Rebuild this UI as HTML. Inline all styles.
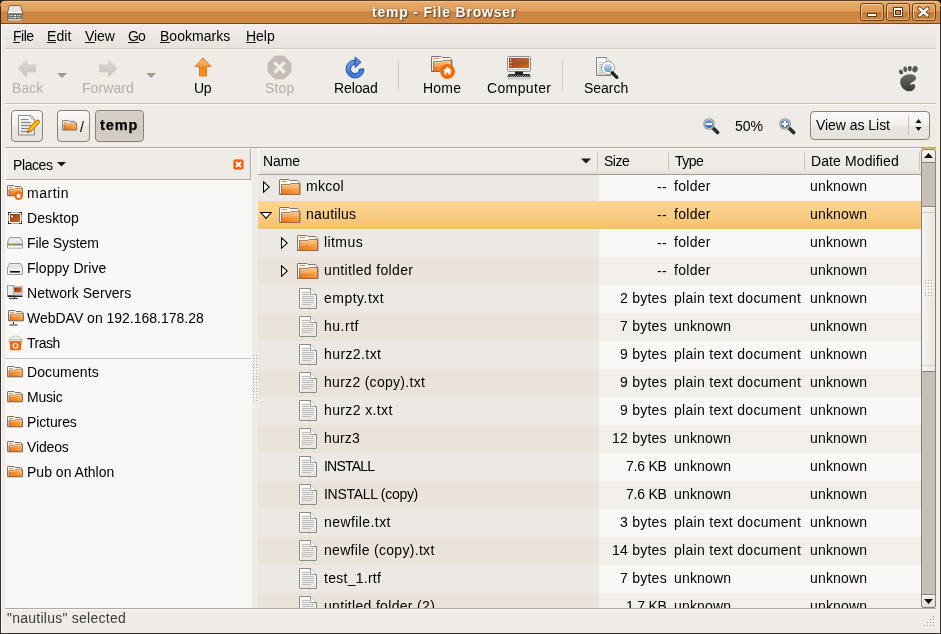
<!DOCTYPE html>
<html><head><meta charset="utf-8">
<style>
*{margin:0;padding:0;box-sizing:border-box}
html,body{width:941px;height:634px;overflow:hidden;background:#1e1b18}
body{position:relative;font-family:"Liberation Sans",sans-serif;font-size:14px;color:#000}
.a{position:absolute;display:block}
.t{position:absolute;white-space:nowrap;line-height:16px;will-change:transform}
.wb{position:absolute;top:3px;width:24px;height:18px;border:1px solid #6b4420;border-radius:3px;
box-shadow:inset 1px 1px 0 #f2c892,inset -1px -1px 0 #e7ac6c;
background:linear-gradient(#e8ad6e,#dc9752 50%,#c47a36 52%,#cd8644)}
</style></head><body>

<svg width="0" height="0" style="position:absolute"><defs>
<linearGradient id="gFold" x1="1" y1="0" x2="0" y2="1"><stop offset="0" stop-color="#fbc07a"/><stop offset="0.45" stop-color="#f59a3c"/><stop offset="1" stop-color="#e86a10"/></linearGradient>
<linearGradient id="gFoldTop" x1="0" y1="0" x2="0" y2="1"><stop offset="0" stop-color="#fdd7a6"/><stop offset="1" stop-color="#f7a24a"/></linearGradient>
<linearGradient id="gPaper" x1="0" y1="0" x2="0" y2="1"><stop offset="0" stop-color="#ffffff"/><stop offset="1" stop-color="#e4e4e1"/></linearGradient>
<linearGradient id="gUp" x1="0" y1="0" x2="0" y2="1"><stop offset="0" stop-color="#fbb978"/><stop offset="0.5" stop-color="#f7993a"/><stop offset="0.52" stop-color="#f28415"/><stop offset="1" stop-color="#f59a20"/></linearGradient>
<linearGradient id="gGrey" x1="0" y1="0" x2="0" y2="1"><stop offset="0" stop-color="#dcd7d2"/><stop offset="1" stop-color="#c9c2bb"/></linearGradient>
<linearGradient id="gBlue" x1="0" y1="0" x2="1" y2="1"><stop offset="0" stop-color="#8fb4ea"/><stop offset="0.5" stop-color="#3a73cf"/><stop offset="1" stop-color="#4d8ee8"/></linearGradient>
<linearGradient id="gScreen" x1="0" y1="0" x2="1" y2="1"><stop offset="0" stop-color="#8a2c12"/><stop offset="0.5" stop-color="#b0501e"/><stop offset="1" stop-color="#d46a10"/></linearGradient>
<linearGradient id="gLens" x1="0" y1="0" x2="0" y2="1"><stop offset="0" stop-color="#d8e8f5"/><stop offset="1" stop-color="#5a94c8"/></linearGradient>
<linearGradient id="gZoom" x1="0" y1="0" x2="0" y2="1"><stop offset="0" stop-color="#6f9bd8"/><stop offset="1" stop-color="#3567b8"/></linearGradient>
<linearGradient id="gFoot" x1="0" y1="0" x2="0" y2="1"><stop offset="0" stop-color="#6a6a6a"/><stop offset="1" stop-color="#3a3a3a"/></linearGradient>
</defs></svg>
<div class="a" style="left:0px;top:20px;width:941px;height:614px;background:#EFEBE7"></div>
<div class="a" style="left:0px;top:24px;width:1px;height:610px;background:#36322d"></div>
<div class="a" style="left:940px;top:24px;width:1px;height:610px;background:#36322d"></div>
<div class="a" style="left:0px;top:633px;width:941px;height:1px;background:#36322d"></div>
<div class="a" style="left:1px;top:24px;width:1px;height:609px;background:#fbfaf8"></div>
<div class="a" style="left:0px;top:0px;width:941px;height:24px;border-radius:6px 6px 0 0;background:linear-gradient(#5a4028 0,#5a4028 1px,#f3c48e 1px,#e6a866 3px,#e0a060 11px,#c98139 12px,#cb8440 13px,#d38c46 22px,#d38c46 23px,#6d4a2a 23px,#6d4a2a 24px)"></div>
<div class="a" style="left:0px;top:6px;width:1px;height:18px;background:#3a2a1c"></div>
<div class="a" style="left:940px;top:6px;width:1px;height:18px;background:#3a2a1c"></div>
<svg class="a" style="left:7px;top:5px" width="16" height="16" viewBox="0 0 16 16" ><path d="M2.5 0.5h11l1.8 6.5v8.5h-14.6v-8.5z" fill="#ececea" stroke="#6b4a2c" stroke-width="0.8"/><path d="M3 1.2h10l1.4 5.3H1.6z" fill="#e2e2e0"/><rect x="1.2" y="7" width="13.6" height="1.2" fill="#fff"/><rect x="1.2" y="8.2" width="13.6" height="6.3" fill="#6d6d6b"/><rect x="2.5" y="10" width="3.5" height="1" fill="#bdbdbb"/><rect x="7" y="10" width="2" height="1" fill="#fff"/><rect x="10" y="10" width="3.5" height="1" fill="#bdbdbb"/><rect x="2.5" y="12" width="3.5" height="1" fill="#bdbdbb"/><rect x="7" y="12" width="2" height="1" fill="#fff"/><rect x="10" y="12" width="3.5" height="1" fill="#bdbdbb"/><rect x="1.2" y="14.5" width="13.6" height="1" fill="#fafafa"/></svg>
<div class="t" style="left:372px;top:4px;font-weight:bold;color:#fff;letter-spacing:0.8px;text-shadow:1px 1px 1px #6a4420,0 0 2px #8a5a2a">temp - File Browser</div>
<div class="wb" style="left:860px"></div>
<div class="wb" style="left:886px"></div>
<div class="wb" style="left:912px"></div>
<div class="a" style="left:867px;top:13px;width:10px;height:4px;background:#fff;border:1px solid #5a3a1a"></div>
<div class="a" style="left:893px;top:7px;width:10px;height:10px;border:1px solid #5a3a1a;background:#fff;border-top-width:1px"></div>
<div class="a" style="left:895px;top:10px;width:6px;height:5px;border:1px solid #5a3a1a;background:#d08a45"></div>
<svg class="a" style="left:917px;top:6px" width="13" height="12" viewBox="0 0 13 12" ><path d="M2.5 2.5l8 7M10.5 2.5l-8 7" stroke="#5a3a1a" stroke-width="4.2" stroke-linecap="round"/><path d="M2.5 2.5l8 7M10.5 2.5l-8 7" stroke="#fff" stroke-width="2.4" stroke-linecap="round"/></svg>
<div class="a" style="left:5px;top:24px;width:931px;height:25px;background:linear-gradient(#f2efeb,#e6e1db)"></div>
<div class="a" style="left:5px;top:48px;width:931px;height:1px;background:#d3cbc1"></div>
<div class="a" style="left:5px;top:49px;width:931px;height:1px;background:#fbfaf8"></div>
<div class="t" style="left:13px;top:28px;letter-spacing:-0.50px;">File</div>
<div class="a" style="left:13px;top:42px;width:7px;height:1px;background:#1c1c1c"></div>
<div class="t" style="left:47px;top:28px;letter-spacing:0.07px;">Edit</div>
<div class="a" style="left:47px;top:42px;width:9px;height:1px;background:#1c1c1c"></div>
<div class="t" style="left:85px;top:28px;letter-spacing:-0.09px;">View</div>
<div class="a" style="left:85px;top:42px;width:10px;height:1px;background:#1c1c1c"></div>
<div class="t" style="left:128px;top:28px;letter-spacing:-0.80px;">Go</div>
<div class="a" style="left:128px;top:42px;width:11px;height:1px;background:#1c1c1c"></div>
<div class="t" style="left:160px;top:28px;letter-spacing:0.03px;">Bookmarks</div>
<div class="a" style="left:160px;top:42px;width:10px;height:1px;background:#1c1c1c"></div>
<div class="t" style="left:246px;top:28px;letter-spacing:-0.04px;">Help</div>
<div class="a" style="left:246px;top:42px;width:10px;height:1px;background:#1c1c1c"></div>
<svg class="a" style="left:17px;top:59px" width="20" height="19" viewBox="0 0 20 19" ><path d="M1 9.5L9.5 1v5h9v7h-9v5z" fill="url(#gGrey)" stroke="#cfc9c3" stroke-width="0.8"/></svg>
<svg class="a" style="left:57px;top:73px" width="11" height="5" viewBox="0 0 11 5" ><path d="M0 0h10l-5 5z" fill="#a39889"/></svg>
<svg class="a" style="left:98px;top:59px" width="20" height="19" viewBox="0 0 20 19" ><path d="M19 9.5L10.5 1v5h-9v7h9v5z" fill="url(#gGrey)" stroke="#cfc9c3" stroke-width="0.8"/></svg>
<svg class="a" style="left:146px;top:73px" width="11" height="5" viewBox="0 0 11 5" ><path d="M0 0h10l-5 5z" fill="#a39889"/></svg>
<div class="t" style="left:12px;top:80px;letter-spacing:0.04px;color:#b7aea4">Back</div>
<div class="t" style="left:82px;top:80px;letter-spacing:0.07px;color:#b7aea4">Forward</div>
<svg class="a" style="left:194px;top:57px" width="18" height="20" viewBox="0 0 18 20" ><path d="M9 1L1 9.5h4.5V19h7V9.5H17z" fill="url(#gUp)" stroke="#d8740e" stroke-width="0.9" stroke-linejoin="round"/></svg>
<div class="t" style="left:194px;top:80px;letter-spacing:-0.30px;">Up</div>
<svg class="a" style="left:267px;top:55px" width="25" height="25" viewBox="0 0 25 25" ><path d="M8 1h9l7 7v9l-7 7H8l-7-7V8z" fill="#c5bdb8" stroke="#bdb5b0" stroke-width="0.6"/><path d="M8.5 8.5l8 8M16.5 8.5l-8 8" stroke="#f2eeea" stroke-width="3.2" stroke-linecap="square"/></svg>
<div class="t" style="left:265px;top:80px;letter-spacing:0.15px;color:#b7aea4">Stop</div>
<svg class="a" style="left:345px;top:56px" width="21" height="23" viewBox="0 0 21 23" ><path d="M10 4A9 9 0 1 0 19 13L14.5 13A4.5 4.5 0 1 1 10 8.5Z" fill="url(#gBlue)" stroke="#1b48a0" stroke-width="0.9" stroke-linejoin="round"/><path d="M10.2 1L16 6.2 10.2 11.6Z" fill="#5a8ad8" stroke="#1b48a0" stroke-width="0.9" stroke-linejoin="round"/></svg>
<div class="t" style="left:334px;top:80px;letter-spacing:-0.11px;">Reload</div>
<div class="a" style="left:398px;top:60px;width:1px;height:31px;background:#d0c8be"></div>
<svg class="a" style="left:431px;top:56px" width="22" height="17" viewBox="0 0 22 17"><path d="M0.5 15.5V1q0-.5.5-.5h9l1 1h7.5l2.5 3V15.5z" fill="#fbfbf9" stroke="#7a766f"/><path d="M2.5 2.5h5.5" stroke="#f7913a" stroke-width="1.2"/><path d="M0.8 15.5q1.5-.3 1.7-2V5.5h8.5l1-1h8.5V15.5z" fill="url(#gFold)" stroke="#8d6b4f" stroke-width="0.9"/><path d="M3 6.4h7.8l1-1h7.2" stroke="#fcd3a4" stroke-width="0.9" fill="none"/><path d="M3 11L19.5 8.5V6.5H3z" fill="#ffffff" fill-opacity="0.22"/></svg>
<svg class="a" style="left:439px;top:63px" width="17" height="17" viewBox="0 0 17 17" ><circle cx="8.5" cy="8.5" r="7.5" fill="#f26b0a"/><path d="M8.5 3.8L4 8h1.5v3.5h2v-2h2v2h2V8H13z" fill="#fff"/></svg>
<div class="t" style="left:423px;top:80px;letter-spacing:0.23px;">Home</div>
<svg class="a" style="left:506px;top:55px" width="26" height="25" viewBox="0 0 26 25" ><rect x="1.5" y="1.5" width="23" height="15" rx="1.2" fill="#ecece9" stroke="#8e8e8a"/><rect x="3" y="3" width="20" height="10" fill="url(#gScreen)"/><path d="M3 9L23 5V3H3z" fill="#fff" fill-opacity="0.12"/><rect x="4" y="4" width="1.5" height="1.3" fill="#f0c090"/><rect x="4" y="7" width="1.5" height="1.3" fill="#f0c090"/><rect x="4" y="10" width="1.5" height="1.3" fill="#f0c090"/><rect x="3" y="14" width="20" height="1" fill="#c8c8c4"/><rect x="19" y="14" width="1" height="1" fill="#7ed000"/><rect x="9" y="16.5" width="8" height="2.5" fill="#1e1e1e"/><path d="M2.5 19h21l1 3h-23z" fill="#262626"/><rect x="3" y="20" width="1" height="1" fill="#8a8a88"/><rect x="5" y="20" width="1" height="1" fill="#8a8a88"/><rect x="7" y="20" width="1" height="1" fill="#8a8a88"/><rect x="9" y="20" width="1" height="1" fill="#8a8a88"/><rect x="11" y="20" width="1" height="1" fill="#8a8a88"/><rect x="13" y="20" width="1" height="1" fill="#8a8a88"/><rect x="15" y="20" width="1" height="1" fill="#8a8a88"/><rect x="17" y="20" width="1" height="1" fill="#8a8a88"/><rect x="19" y="20" width="1" height="1" fill="#8a8a88"/><rect x="21" y="20" width="1" height="1" fill="#8a8a88"/><rect x="4" y="21" width="1" height="1" fill="#8a8a88"/><rect x="6" y="21" width="1" height="1" fill="#8a8a88"/><rect x="8" y="21" width="1" height="1" fill="#8a8a88"/><rect x="10" y="21" width="1" height="1" fill="#8a8a88"/><rect x="12" y="21" width="1" height="1" fill="#8a8a88"/><rect x="14" y="21" width="1" height="1" fill="#8a8a88"/><rect x="16" y="21" width="1" height="1" fill="#8a8a88"/><rect x="18" y="21" width="1" height="1" fill="#8a8a88"/><rect x="20" y="21" width="1" height="1" fill="#8a8a88"/><rect x="22" y="21" width="1" height="1" fill="#8a8a88"/><rect x="3" y="22" width="1" height="1" fill="#8a8a88"/><rect x="5" y="22" width="1" height="1" fill="#8a8a88"/><rect x="7" y="22" width="1" height="1" fill="#8a8a88"/><rect x="9" y="22" width="1" height="1" fill="#8a8a88"/><rect x="11" y="22" width="1" height="1" fill="#8a8a88"/><rect x="13" y="22" width="1" height="1" fill="#8a8a88"/><rect x="15" y="22" width="1" height="1" fill="#8a8a88"/><rect x="17" y="22" width="1" height="1" fill="#8a8a88"/><rect x="19" y="22" width="1" height="1" fill="#8a8a88"/><rect x="21" y="22" width="1" height="1" fill="#8a8a88"/><rect x="1.5" y="22" width="23" height="2" rx="1" fill="#dcdcd8" stroke="#a8a8a4" stroke-width="0.5"/></svg>
<div class="t" style="left:487px;top:80px;letter-spacing:0.36px;">Computer</div>
<div class="a" style="left:562px;top:60px;width:1px;height:31px;background:#d0c8be"></div>
<svg class="a" style="left:595px;top:56px" width="24" height="23" viewBox="0 0 24 23" ><path d="M1.5 1.5h10l4.5 4.5v13.5h-14.5z" fill="url(#gPaper)" stroke="#858580"/><path d="M11.5 1.5v4.5h4.5" fill="#fff" stroke="#999" stroke-width="0.7"/><line x1="3.5" y1="6.5" x2="7.5" y2="6.5" stroke="#c4c4c0"/><line x1="3.5" y1="8.5" x2="7.5" y2="8.5" stroke="#c4c4c0"/><line x1="3.5" y1="10.5" x2="7.5" y2="10.5" stroke="#c4c4c0"/><line x1="3.5" y1="12.5" x2="7.5" y2="12.5" stroke="#c4c4c0"/><line x1="3.5" y1="14.5" x2="7.5" y2="14.5" stroke="#c4c4c0"/><line x1="3.5" y1="16.5" x2="7.5" y2="16.5" stroke="#c4c4c0"/><line x1="3.5" y1="18.5" x2="7.5" y2="18.5" stroke="#c4c4c0"/><circle cx="13" cy="12" r="5.3" fill="url(#gLens)" stroke="#fafafa" stroke-width="2.2"/><circle cx="13" cy="12" r="6.6" fill="none" stroke="#8c8c88" stroke-width="0.8"/><path d="M17.2 16.7l4.6 4.6" stroke="#1a1a1a" stroke-width="3.2" stroke-linecap="round"/><path d="M18.3 17.8l2.5 2.5" stroke="#777" stroke-width="0.8" stroke-dasharray="0.8 0.8"/></svg>
<div class="t" style="left:584px;top:80px;letter-spacing:-0.03px;">Search</div>
<svg class="a" style="left:898px;top:66px" width="22" height="27" viewBox="0 0 22 27" ><ellipse cx="3" cy="6" rx="2" ry="2.6" fill="#5a5a5a" transform="rotate(-25 3 6)"/><ellipse cx="7.2" cy="3.2" rx="2" ry="2.8" fill="#5a5a5a" transform="rotate(-10 7.2 3.2)"/><ellipse cx="11.8" cy="2.6" rx="2" ry="2.7" fill="#555"/><ellipse cx="17" cy="3.2" rx="2.6" ry="3.2" fill="#555" transform="rotate(20 17 3.2)"/><path d="M6 10c4-3 12-2 12 2 0 2.5-3 3.8-5 5-1.2.8-.8 2.2.6 1.4 1.8-1 3.5-.4 3.6 1.6.2 3.5-4 5.8-7 5.2C5 24.5 1.5 19 2.3 14.5 2.6 12.5 4 11.2 6 10z" fill="url(#gFoot)"/></svg>
<div class="a" style="left:5px;top:103px;width:931px;height:1px;background:#c9c0b5"></div>
<div class="a" style="left:5px;top:104px;width:931px;height:1px;background:#fbfaf8"></div>
<div class="a" style="left:11px;top:110px;width:32px;height:32px;border:1px solid #8b8176;border-radius:4px;background:linear-gradient(#fbfaf9 0,#f2efeb 50%,#e9e5e0 51%,#e6e2dc 100%)"></div>
<div class="a" style="left:57px;top:110px;width:33px;height:32px;border:1px solid #8b8176;border-radius:4px;background:linear-gradient(#fbfaf9 0,#f2efeb 50%,#e9e5e0 51%,#e6e2dc 100%)"></div>
<div class="a" style="left:95px;top:110px;width:49px;height:32px;border:1px solid #8b8176;border-radius:4px;background:linear-gradient(#d8d1c9,#d4ccc3 50%,#cfc7be 51%,#d7d0c8)"></div>
<svg class="a" style="left:17px;top:114px" width="23" height="23" viewBox="0 0 23 23" ><path d="M1.5 1.5h10q6 0 6 6v13.5h-16z" fill="url(#gPaper)" stroke="#8d8e89"/><path d="M11.5 1.5q2.5 0 2.5 3.2 3.5-.2 3.5 2.8" fill="#fff" stroke="#9a9a96" stroke-width="0.8"/><line x1="4" y1="5.5" x2="11.5" y2="5.5" stroke="#858583" stroke-width="1.2"/><line x1="4" y1="8.5" x2="14" y2="8.5" stroke="#858583" stroke-width="1.2"/><line x1="4" y1="11.5" x2="14" y2="11.5" stroke="#858583" stroke-width="1.2"/><line x1="4" y1="14.5" x2="14" y2="14.5" stroke="#858583" stroke-width="1.2"/><line x1="4" y1="17.5" x2="14" y2="17.5" stroke="#858583" stroke-width="1.2"/><path d="M11.4 14.9L19.2 6.8Q20.8 5.6 21.9 6.6 22.9 7.8 21.8 9.2L14 17.4z" fill="#f8d200" stroke="#e46c00" stroke-width="1.1" stroke-linejoin="round"/><path d="M11.4 14.9L14 17.4 10.6 18.6z" fill="#f0c080" stroke="#e46c00" stroke-width="0.6"/><path d="M10.4 18.8l.6-1.8 1.2 1.2z" fill="#111"/></svg>
<svg class="a" style="left:62px;top:120px" width="15" height="12" viewBox="0 0 16 13"><path d="M0.5 10.7V1q0-.5.5-.5h6l1 1h5.5l2 2V10.7z" fill="#fbfbf9" stroke="#7a766f"/><path d="M2 2.5h4" stroke="#f7913a" stroke-width="1.1"/><path d="M0.8 10.7q1-.3 1.2-1.3V4.3h6l1-1h6.5V10.7z" fill="url(#gFold)" stroke="#8d6b4f" stroke-width="0.9"/><path d="M2.5 5.1h5.5l1-1h5.5" stroke="#fcd3a4" stroke-width="0.8" fill="none"/></svg>
<div class="t" style="left:80px;top:119px;font-size:14px;letter-spacing:0">/</div>
<div class="t" style="left:100px;top:117px;font-weight:bold;letter-spacing:0.9px;font-size:14.5px;-webkit-text-stroke:0.25px #000">temp</div>
<svg class="a" style="left:703px;top:118px" width="18" height="18" viewBox="0 0 18 18" ><path d="M10 10l4.6 4.6" stroke="#262626" stroke-width="3.6" stroke-linecap="round"/><path d="M11.2 11.2l2.6 2.6" stroke="#666" stroke-width="0.8" stroke-dasharray="0.7 0.7"/><circle cx="6" cy="6" r="5.2" fill="#f4f4f2" stroke="#9a9a96" stroke-width="1.3"/><circle cx="6" cy="6" r="4.1" fill="url(#gZoom)"/><rect x="3" y="5" width="6" height="2" fill="#fff"/></svg>
<svg class="a" style="left:779px;top:118px" width="18" height="18" viewBox="0 0 18 18" ><path d="M10 10l4.6 4.6" stroke="#262626" stroke-width="3.6" stroke-linecap="round"/><path d="M11.2 11.2l2.6 2.6" stroke="#666" stroke-width="0.8" stroke-dasharray="0.7 0.7"/><circle cx="6" cy="6" r="5.2" fill="#f4f4f2" stroke="#9a9a96" stroke-width="1.3"/><circle cx="6" cy="6" r="4.1" fill="url(#gZoom)"/><rect x="3" y="5" width="6" height="2" fill="#fff"/><rect x="5" y="3" width="2" height="6" fill="#fff"/></svg>
<div class="t" style="left:735px;top:118px;letter-spacing:-0.04px;">50%</div>
<div class="a" style="left:810px;top:111px;width:120px;height:29px;border:1px solid #8b8176;border-radius:4px;background:linear-gradient(#fbfaf9 0,#f2efeb 50%,#e9e5e0 51%,#e6e2dc 100%)"></div>
<div class="a" style="left:908px;top:115px;width:1px;height:20px;background:#c9c1b7"></div>
<svg class="a" style="left:915px;top:118px" width="7" height="14" viewBox="0 0 7 14" ><path d="M0.5 5h6l-3-4z M0.5 9h6l-3 4z" fill="#111"/></svg>
<div class="t" style="left:816px;top:117px;letter-spacing:-0.04px;">View as List</div>
<div class="a" style="left:5px;top:147px;width:247px;height:462px;background:#F9F8F7"></div>
<div class="a" style="left:5px;top:147px;width:931px;height:1px;background:#b2a99e"></div>
<div class="a" style="left:5px;top:148px;width:246px;height:32px;background:#EFEBE7;border-top:1px solid #fff;border-left:1px solid #fff;border-right:1px solid #b5aca1;border-bottom:1px solid #b5aca1"></div>
<div class="t" style="left:13px;top:157px;letter-spacing:-0.41px;">Places</div>
<svg class="a" style="left:57px;top:162px" width="10" height="5" viewBox="0 0 10 5" ><path d="M0 0h9l-4.5 4.5z" fill="#1c1c1c"/></svg>
<svg class="a" style="left:233px;top:159px" width="11" height="11" viewBox="0 0 11 11" ><rect x="0.5" y="0.5" width="10" height="10" rx="1.8" fill="#f05f12" stroke="#f08a50" stroke-width="0.6"/><path d="M3 3l5 5M8 3l-5 5" stroke="#fff" stroke-width="2"/></svg>
<div class="a" style="left:5px;top:608px;width:931px;height:1px;background:#b2a99e"></div>
<div class="a" style="left:5px;top:609px;width:931px;height:1px;background:#fbfaf8"></div>
<div class="t" style="left:27px;top:185px;letter-spacing:0.52px;">martin</div>
<div class="t" style="left:27px;top:210px;letter-spacing:0.08px;">Desktop</div>
<div class="t" style="left:27px;top:235px;letter-spacing:-0.12px;">File System</div>
<div class="t" style="left:27px;top:260px;letter-spacing:0.07px;">Floppy Drive</div>
<div class="t" style="left:27px;top:285px;letter-spacing:0.06px;">Network Servers</div>
<div class="t" style="left:27px;top:310px;letter-spacing:-0.01px;">WebDAV on 192.168.178.28</div>
<div class="t" style="left:27px;top:335px;letter-spacing:-0.51px;">Trash</div>
<div class="a" style="left:5px;top:358px;width:246px;height:1px;background:#c8c3bd"></div>
<div class="t" style="left:27px;top:364px;letter-spacing:0.11px;">Documents</div>
<svg class="a" style="left:7px;top:366px" width="16" height="13" viewBox="0 0 16 13"><path d="M0.5 10.7V1q0-.5.5-.5h6l1 1h5.5l2 2V10.7z" fill="#fbfbf9" stroke="#7a766f"/><path d="M2 2.5h4" stroke="#f7913a" stroke-width="1.1"/><path d="M0.8 10.7q1-.3 1.2-1.3V4.3h6l1-1h6.5V10.7z" fill="url(#gFold)" stroke="#8d6b4f" stroke-width="0.9"/><path d="M2.5 5.1h5.5l1-1h5.5" stroke="#fcd3a4" stroke-width="0.8" fill="none"/></svg>
<div class="t" style="left:27px;top:389px;letter-spacing:-0.20px;">Music</div>
<svg class="a" style="left:7px;top:391px" width="16" height="13" viewBox="0 0 16 13"><path d="M0.5 10.7V1q0-.5.5-.5h6l1 1h5.5l2 2V10.7z" fill="#fbfbf9" stroke="#7a766f"/><path d="M2 2.5h4" stroke="#f7913a" stroke-width="1.1"/><path d="M0.8 10.7q1-.3 1.2-1.3V4.3h6l1-1h6.5V10.7z" fill="url(#gFold)" stroke="#8d6b4f" stroke-width="0.9"/><path d="M2.5 5.1h5.5l1-1h5.5" stroke="#fcd3a4" stroke-width="0.8" fill="none"/></svg>
<div class="t" style="left:27px;top:414px;letter-spacing:-0.11px;">Pictures</div>
<svg class="a" style="left:7px;top:416px" width="16" height="13" viewBox="0 0 16 13"><path d="M0.5 10.7V1q0-.5.5-.5h6l1 1h5.5l2 2V10.7z" fill="#fbfbf9" stroke="#7a766f"/><path d="M2 2.5h4" stroke="#f7913a" stroke-width="1.1"/><path d="M0.8 10.7q1-.3 1.2-1.3V4.3h6l1-1h6.5V10.7z" fill="url(#gFold)" stroke="#8d6b4f" stroke-width="0.9"/><path d="M2.5 5.1h5.5l1-1h5.5" stroke="#fcd3a4" stroke-width="0.8" fill="none"/></svg>
<div class="t" style="left:27px;top:439px;letter-spacing:-0.16px;">Videos</div>
<svg class="a" style="left:7px;top:441px" width="16" height="13" viewBox="0 0 16 13"><path d="M0.5 10.7V1q0-.5.5-.5h6l1 1h5.5l2 2V10.7z" fill="#fbfbf9" stroke="#7a766f"/><path d="M2 2.5h4" stroke="#f7913a" stroke-width="1.1"/><path d="M0.8 10.7q1-.3 1.2-1.3V4.3h6l1-1h6.5V10.7z" fill="url(#gFold)" stroke="#8d6b4f" stroke-width="0.9"/><path d="M2.5 5.1h5.5l1-1h5.5" stroke="#fcd3a4" stroke-width="0.8" fill="none"/></svg>
<div class="t" style="left:27px;top:464px;letter-spacing:0.01px;">Pub on Athlon</div>
<svg class="a" style="left:7px;top:466px" width="16" height="13" viewBox="0 0 16 13"><path d="M0.5 10.7V1q0-.5.5-.5h6l1 1h5.5l2 2V10.7z" fill="#fbfbf9" stroke="#7a766f"/><path d="M2 2.5h4" stroke="#f7913a" stroke-width="1.1"/><path d="M0.8 10.7q1-.3 1.2-1.3V4.3h6l1-1h6.5V10.7z" fill="url(#gFold)" stroke="#8d6b4f" stroke-width="0.9"/><path d="M2.5 5.1h5.5l1-1h5.5" stroke="#fcd3a4" stroke-width="0.8" fill="none"/></svg>
<svg class="a" style="left:7px;top:185px" width="16" height="13" viewBox="0 0 16 13"><path d="M0.5 10.7V1q0-.5.5-.5h6l1 1h5.5l2 2V10.7z" fill="#fbfbf9" stroke="#7a766f"/><path d="M2 2.5h4" stroke="#f7913a" stroke-width="1.1"/><path d="M0.8 10.7q1-.3 1.2-1.3V4.3h6l1-1h6.5V10.7z" fill="url(#gFold)" stroke="#8d6b4f" stroke-width="0.9"/><path d="M2.5 5.1h5.5l1-1h5.5" stroke="#fcd3a4" stroke-width="0.8" fill="none"/></svg>
<svg class="a" style="left:14px;top:191px" width="10" height="10" viewBox="0 0 10 10" ><circle cx="4.6" cy="4.6" r="4.4" fill="#f26b0a"/><path d="M4.6 2.2L2 4.8h1v2h3.2v-2h1z" fill="#fff"/></svg>
<svg class="a" style="left:8px;top:212px" width="14" height="12" viewBox="0 0 14 12" ><rect x="0.5" y="0.5" width="13" height="11" fill="#f6f6f4" stroke="#9a9a96" stroke-width="0.8"/><rect x="2" y="2" width="10" height="8" fill="url(#gScreen)"/><rect x="3" y="3.5" width="2" height="2" fill="#f4e6da"/><path d="M0 3V0h3M11 0h3v3M14 9v3h-3M3 12H0V9" fill="none" stroke="#111" stroke-width="1.4"/></svg>
<svg class="a" style="left:7px;top:237px" width="16" height="12" viewBox="0 0 16 12" ><path d="M2.5 0.5h11l2 5v5.5h-15v-5.5z" fill="#eaeae8" stroke="#9a9a96"/><rect x="1" y="6.5" width="14" height="2" fill="#8a8a86"/><rect x="3" y="6.5" width="2.5" height="2" fill="#7ee000"/><rect x="1" y="9" width="14" height="1.5" fill="#fff"/></svg>
<svg class="a" style="left:7px;top:263px" width="16" height="12" viewBox="0 0 16 12" ><path d="M2.5 0.5h11l2 4.5v6.5h-15v-6.5z" fill="#f2f2f0" stroke="#9a9a96"/><path d="M3 1.2h10l1.5 4H1.5z" fill="#e4e4e2"/><rect x="3" y="8" width="10" height="1.6" fill="#111"/></svg>
<svg class="a" style="left:7px;top:285px" width="16" height="16" viewBox="0 0 16 16" ><rect x="0.5" y="0.5" width="6" height="10" fill="#eee" stroke="#888" stroke-width="0.8"/><rect x="6" y="1.5" width="9.5" height="8" fill="#ddd" stroke="#999" stroke-width="0.6"/><rect x="7" y="2.5" width="7.5" height="5" fill="url(#gScreen)"/><rect x="0.5" y="10.5" width="15" height="1.5" fill="#222"/><path d="M2 13.5h9" stroke="#444" stroke-width="1.2"/><path d="M7.5 10.5v3" stroke="#333"/></svg>
<svg class="a" style="left:8px;top:310px" width="16" height="13" viewBox="0 0 16 13"><path d="M0.5 10.7V1q0-.5.5-.5h6l1 1h5.5l2 2V10.7z" fill="#fbfbf9" stroke="#7a766f"/><path d="M2 2.5h4" stroke="#f7913a" stroke-width="1.1"/><path d="M0.8 10.7q1-.3 1.2-1.3V4.3h6l1-1h6.5V10.7z" fill="url(#gFold)" stroke="#8d6b4f" stroke-width="0.9"/><path d="M2.5 5.1h5.5l1-1h5.5" stroke="#fcd3a4" stroke-width="0.8" fill="none"/></svg>
<svg class="a" style="left:9px;top:322px" width="10" height="4" viewBox="0 0 10 4" ><path d="M4.5 0v2M0.5 3h8" stroke="#333" stroke-width="1"/></svg>
<svg class="a" style="left:8px;top:335px" width="15" height="16" viewBox="0 0 15 16" ><path d="M2 5C1 3 3 1.5 5 2.2 6 0.5 9 0.5 10 2.2 12 1.5 14 3 13 5z" fill="#f4f4f2" stroke="#a8a8a4" stroke-width="0.7"/><path d="M0.8 4.8h13.4v1.8H0.8z" fill="#e8e8e6" stroke="#a0a09c" stroke-width="0.6"/><path d="M1.8 6.6h11.4l-.6 8.4H2.4z" fill="#f06a10" stroke="#d85a08" stroke-width="0.5"/><circle cx="7.5" cy="10.8" r="2.3" fill="none" stroke="#fff" stroke-width="1.2"/></svg>
<svg class="a" style="left:253px;top:355px" width="6" height="49" viewBox="0 0 6 49" ><rect x="0" y="0" width="1" height="1" fill="#a8a29a"/><rect x="1" y="1" width="1" height="1" fill="#fff"/><rect x="3" y="0" width="1" height="1" fill="#a8a29a"/><rect x="4" y="1" width="1" height="1" fill="#fff"/><rect x="0" y="3" width="1" height="1" fill="#a8a29a"/><rect x="1" y="4" width="1" height="1" fill="#fff"/><rect x="3" y="3" width="1" height="1" fill="#a8a29a"/><rect x="4" y="4" width="1" height="1" fill="#fff"/><rect x="0" y="6" width="1" height="1" fill="#a8a29a"/><rect x="1" y="7" width="1" height="1" fill="#fff"/><rect x="3" y="6" width="1" height="1" fill="#a8a29a"/><rect x="4" y="7" width="1" height="1" fill="#fff"/><rect x="0" y="9" width="1" height="1" fill="#a8a29a"/><rect x="1" y="10" width="1" height="1" fill="#fff"/><rect x="3" y="9" width="1" height="1" fill="#a8a29a"/><rect x="4" y="10" width="1" height="1" fill="#fff"/><rect x="0" y="12" width="1" height="1" fill="#a8a29a"/><rect x="1" y="13" width="1" height="1" fill="#fff"/><rect x="3" y="12" width="1" height="1" fill="#a8a29a"/><rect x="4" y="13" width="1" height="1" fill="#fff"/><rect x="0" y="15" width="1" height="1" fill="#a8a29a"/><rect x="1" y="16" width="1" height="1" fill="#fff"/><rect x="3" y="15" width="1" height="1" fill="#a8a29a"/><rect x="4" y="16" width="1" height="1" fill="#fff"/><rect x="0" y="18" width="1" height="1" fill="#a8a29a"/><rect x="1" y="19" width="1" height="1" fill="#fff"/><rect x="3" y="18" width="1" height="1" fill="#a8a29a"/><rect x="4" y="19" width="1" height="1" fill="#fff"/><rect x="0" y="21" width="1" height="1" fill="#a8a29a"/><rect x="1" y="22" width="1" height="1" fill="#fff"/><rect x="3" y="21" width="1" height="1" fill="#a8a29a"/><rect x="4" y="22" width="1" height="1" fill="#fff"/><rect x="0" y="24" width="1" height="1" fill="#a8a29a"/><rect x="1" y="25" width="1" height="1" fill="#fff"/><rect x="3" y="24" width="1" height="1" fill="#a8a29a"/><rect x="4" y="25" width="1" height="1" fill="#fff"/><rect x="0" y="27" width="1" height="1" fill="#a8a29a"/><rect x="1" y="28" width="1" height="1" fill="#fff"/><rect x="3" y="27" width="1" height="1" fill="#a8a29a"/><rect x="4" y="28" width="1" height="1" fill="#fff"/><rect x="0" y="30" width="1" height="1" fill="#a8a29a"/><rect x="1" y="31" width="1" height="1" fill="#fff"/><rect x="3" y="30" width="1" height="1" fill="#a8a29a"/><rect x="4" y="31" width="1" height="1" fill="#fff"/><rect x="0" y="33" width="1" height="1" fill="#a8a29a"/><rect x="1" y="34" width="1" height="1" fill="#fff"/><rect x="3" y="33" width="1" height="1" fill="#a8a29a"/><rect x="4" y="34" width="1" height="1" fill="#fff"/><rect x="0" y="36" width="1" height="1" fill="#a8a29a"/><rect x="1" y="37" width="1" height="1" fill="#fff"/><rect x="3" y="36" width="1" height="1" fill="#a8a29a"/><rect x="4" y="37" width="1" height="1" fill="#fff"/><rect x="0" y="39" width="1" height="1" fill="#a8a29a"/><rect x="1" y="40" width="1" height="1" fill="#fff"/><rect x="3" y="39" width="1" height="1" fill="#a8a29a"/><rect x="4" y="40" width="1" height="1" fill="#fff"/><rect x="0" y="42" width="1" height="1" fill="#a8a29a"/><rect x="1" y="43" width="1" height="1" fill="#fff"/><rect x="3" y="42" width="1" height="1" fill="#a8a29a"/><rect x="4" y="43" width="1" height="1" fill="#fff"/><rect x="0" y="45" width="1" height="1" fill="#a8a29a"/><rect x="1" y="46" width="1" height="1" fill="#fff"/><rect x="3" y="45" width="1" height="1" fill="#a8a29a"/><rect x="4" y="46" width="1" height="1" fill="#fff"/></svg>
<div class="a" style="left:258px;top:148px;width:663px;height:26px;background:linear-gradient(#fbfaf9 0,#fbfaf9 1px,#efece8 1px,#eeebe7 22px,#e1ddd7 26px);border-left:1px solid #fff"></div>
<div class="a" style="left:258px;top:174px;width:663px;height:1px;background:#a99f94"></div>
<div class="a" style="left:597px;top:152px;width:1px;height:19px;background:#cdc5bb"></div>
<div class="a" style="left:668px;top:152px;width:1px;height:19px;background:#cdc5bb"></div>
<div class="a" style="left:804px;top:152px;width:1px;height:19px;background:#cdc5bb"></div>
<div class="a" style="left:919px;top:152px;width:1px;height:19px;background:#cdc5bb"></div>
<div class="t" style="left:263px;top:153px;letter-spacing:-0.08px;">Name</div>
<svg class="a" style="left:581px;top:158px" width="11" height="6" viewBox="0 0 11 6" ><path d="M0 0.5h10l-5 5z" fill="#1c1c1c"/></svg>
<div class="t" style="left:604px;top:153px;letter-spacing:-0.48px;">Size</div>
<div class="t" style="left:675px;top:153px;letter-spacing:-0.49px;">Type</div>
<div class="t" style="left:811px;top:153px;letter-spacing:0.11px;">Date Modified</div>
<div class="a" style="left:0;top:175px;width:941px;height:433px;overflow:hidden">
<div class="a" style="left:258px;top:-2px;width:341px;height:28px;background:#ECE8E3"></div>
<div class="a" style="left:599px;top:-2px;width:322px;height:28px;background:#F9F8F7"></div>
<svg class="a" style="left:263px;top:6px" width="7" height="12" viewBox="0 0 7 12"><path d="M0.5 0.8v10.4L6.3 6z" fill="#fff" stroke="#000" stroke-width="1.1" stroke-linejoin="miter"/></svg>
<svg class="a" style="left:279px;top:4px" width="22" height="17" viewBox="0 0 22 17"><path d="M0.5 15.5V1q0-.5.5-.5h9l1 1h7.5l2.5 3V15.5z" fill="#fbfbf9" stroke="#7a766f"/><path d="M2.5 2.5h5.5" stroke="#f7913a" stroke-width="1.2"/><path d="M0.8 15.5q1.5-.3 1.7-2V5.5h8.5l1-1h8.5V15.5z" fill="url(#gFold)" stroke="#8d6b4f" stroke-width="0.9"/><path d="M3 6.4h7.8l1-1h7.2" stroke="#fcd3a4" stroke-width="0.9" fill="none"/><path d="M3 11L19.5 8.5V6.5H3z" fill="#ffffff" fill-opacity="0.22"/></svg>
<div class="t" style="left:306px;top:3px;letter-spacing:0.27px;">mkcol</div>
<div class="t" style="right:274px;top:4px;letter-spacing:0.4px">--</div>
<div class="t" style="left:674px;top:3px;letter-spacing:0.30px;">folder</div>
<div class="t" style="left:810px;top:3px;letter-spacing:0.18px;">unknown</div>
<div class="a" style="left:258px;top:26px;width:663px;height:28px;background:linear-gradient(#fcd593,#f9cd84 50%,#f5bf6a)"></div>
<svg class="a" style="left:260px;top:37px" width="12" height="7" viewBox="0 0 12 7"><path d="M0.8 0.5h10.4L6 6.3z" fill="#fff" stroke="#000" stroke-width="1.1"/></svg>
<svg class="a" style="left:279px;top:32px" width="22" height="17" viewBox="0 0 22 17"><path d="M0.5 15.5V1q0-.5.5-.5h9l1 1h7.5l2.5 3V15.5z" fill="#fbfbf9" stroke="#7a766f"/><path d="M2.5 2.5h5.5" stroke="#f7913a" stroke-width="1.2"/><path d="M0.8 15.5q1.5-.3 1.7-2V5.5h8.5l1-1h8.5V15.5z" fill="url(#gFold)" stroke="#8d6b4f" stroke-width="0.9"/><path d="M3 6.4h7.8l1-1h7.2" stroke="#fcd3a4" stroke-width="0.9" fill="none"/><path d="M3 11L19.5 8.5V6.5H3z" fill="#ffffff" fill-opacity="0.22"/></svg>
<div class="t" style="left:306px;top:31px;letter-spacing:0.26px;">nautilus</div>
<div class="t" style="right:274px;top:32px;letter-spacing:0.4px">--</div>
<div class="t" style="left:674px;top:31px;letter-spacing:0.30px;">folder</div>
<div class="t" style="left:810px;top:31px;letter-spacing:0.18px;">unknown</div>
<div class="a" style="left:258px;top:54px;width:341px;height:28px;background:#ECE8E3"></div>
<div class="a" style="left:599px;top:54px;width:322px;height:28px;background:#F9F8F7"></div>
<svg class="a" style="left:281px;top:62px" width="7" height="12" viewBox="0 0 7 12"><path d="M0.5 0.8v10.4L6.3 6z" fill="#fff" stroke="#000" stroke-width="1.1" stroke-linejoin="miter"/></svg>
<svg class="a" style="left:297px;top:60px" width="22" height="17" viewBox="0 0 22 17"><path d="M0.5 15.5V1q0-.5.5-.5h9l1 1h7.5l2.5 3V15.5z" fill="#fbfbf9" stroke="#7a766f"/><path d="M2.5 2.5h5.5" stroke="#f7913a" stroke-width="1.2"/><path d="M0.8 15.5q1.5-.3 1.7-2V5.5h8.5l1-1h8.5V15.5z" fill="url(#gFold)" stroke="#8d6b4f" stroke-width="0.9"/><path d="M3 6.4h7.8l1-1h7.2" stroke="#fcd3a4" stroke-width="0.9" fill="none"/><path d="M3 11L19.5 8.5V6.5H3z" fill="#ffffff" fill-opacity="0.22"/></svg>
<div class="t" style="left:324px;top:59px;letter-spacing:0.42px;">litmus</div>
<div class="t" style="right:274px;top:60px;letter-spacing:0.4px">--</div>
<div class="t" style="left:674px;top:59px;letter-spacing:0.30px;">folder</div>
<div class="t" style="left:810px;top:59px;letter-spacing:0.18px;">unknown</div>
<div class="a" style="left:258px;top:82px;width:341px;height:28px;background:#E9E3DA"></div>
<div class="a" style="left:599px;top:82px;width:322px;height:28px;background:#F3F0EC"></div>
<svg class="a" style="left:281px;top:90px" width="7" height="12" viewBox="0 0 7 12"><path d="M0.5 0.8v10.4L6.3 6z" fill="#fff" stroke="#000" stroke-width="1.1" stroke-linejoin="miter"/></svg>
<svg class="a" style="left:297px;top:88px" width="22" height="17" viewBox="0 0 22 17"><path d="M0.5 15.5V1q0-.5.5-.5h9l1 1h7.5l2.5 3V15.5z" fill="#fbfbf9" stroke="#7a766f"/><path d="M2.5 2.5h5.5" stroke="#f7913a" stroke-width="1.2"/><path d="M0.8 15.5q1.5-.3 1.7-2V5.5h8.5l1-1h8.5V15.5z" fill="url(#gFold)" stroke="#8d6b4f" stroke-width="0.9"/><path d="M3 6.4h7.8l1-1h7.2" stroke="#fcd3a4" stroke-width="0.9" fill="none"/><path d="M3 11L19.5 8.5V6.5H3z" fill="#ffffff" fill-opacity="0.22"/></svg>
<div class="t" style="left:324px;top:87px;letter-spacing:0.35px;">untitled folder</div>
<div class="t" style="right:274px;top:88px;letter-spacing:0.4px">--</div>
<div class="t" style="left:674px;top:87px;letter-spacing:0.30px;">folder</div>
<div class="t" style="left:810px;top:87px;letter-spacing:0.18px;">unknown</div>
<div class="a" style="left:258px;top:110px;width:341px;height:28px;background:#ECE8E3"></div>
<div class="a" style="left:599px;top:110px;width:322px;height:28px;background:#F9F8F7"></div>
<svg class="a" style="left:298px;top:111px" width="20" height="24" viewBox="0 0 20 24"><path d="M1.5 2.5h11l6 6v13.5q0 .5-.5.5h-16q-.5 0-.5-.5z" fill="url(#gPaper)" stroke="#8b8c87"/><path d="M2.5 21.5v-18h9.5" fill="none" stroke="#ffffff" stroke-width="1"/><path d="M12.5 2.5v6h6" fill="#ffffff" stroke="#8b8c87" stroke-width="0.9"/><line x1="4" y1="6.5" x2="11.5" y2="6.5" stroke="#bbbcb8"/><line x1="4" y1="8.5" x2="11.5" y2="8.5" stroke="#bbbcb8"/><line x1="4" y1="10.5" x2="16" y2="10.5" stroke="#bbbcb8"/><line x1="4" y1="12.5" x2="16" y2="12.5" stroke="#bbbcb8"/><line x1="4" y1="14.5" x2="16" y2="14.5" stroke="#bbbcb8"/><line x1="4" y1="16.5" x2="16" y2="16.5" stroke="#bbbcb8"/><line x1="4" y1="18.5" x2="13" y2="18.5" stroke="#bbbcb8"/></svg>
<div class="t" style="left:324px;top:115px;letter-spacing:0.50px;">empty.txt</div>
<div class="t" style="right:274px;top:115px;letter-spacing:0.25px;">2 bytes</div>
<div class="t" style="left:674px;top:115px;letter-spacing:0.30px;">plain text document</div>
<div class="t" style="left:810px;top:115px;letter-spacing:0.18px;">unknown</div>
<div class="a" style="left:258px;top:138px;width:341px;height:28px;background:#E9E3DA"></div>
<div class="a" style="left:599px;top:138px;width:322px;height:28px;background:#F3F0EC"></div>
<svg class="a" style="left:298px;top:139px" width="20" height="24" viewBox="0 0 20 24"><path d="M1.5 2.5h11l6 6v13.5q0 .5-.5.5h-16q-.5 0-.5-.5z" fill="url(#gPaper)" stroke="#8b8c87"/><path d="M2.5 21.5v-18h9.5" fill="none" stroke="#ffffff" stroke-width="1"/><path d="M12.5 2.5v6h6" fill="#ffffff" stroke="#8b8c87" stroke-width="0.9"/><line x1="4" y1="6.5" x2="11.5" y2="6.5" stroke="#bbbcb8"/><line x1="4" y1="8.5" x2="11.5" y2="8.5" stroke="#bbbcb8"/><line x1="4" y1="10.5" x2="16" y2="10.5" stroke="#bbbcb8"/><line x1="4" y1="12.5" x2="16" y2="12.5" stroke="#bbbcb8"/><line x1="4" y1="14.5" x2="16" y2="14.5" stroke="#bbbcb8"/><line x1="4" y1="16.5" x2="16" y2="16.5" stroke="#bbbcb8"/><line x1="4" y1="18.5" x2="13" y2="18.5" stroke="#bbbcb8"/></svg>
<div class="t" style="left:324px;top:143px;letter-spacing:0.51px;">hu.rtf</div>
<div class="t" style="right:274px;top:143px;letter-spacing:0.25px;">7 bytes</div>
<div class="t" style="left:674px;top:143px;letter-spacing:0.18px;">unknown</div>
<div class="t" style="left:810px;top:143px;letter-spacing:0.18px;">unknown</div>
<div class="a" style="left:258px;top:166px;width:341px;height:28px;background:#ECE8E3"></div>
<div class="a" style="left:599px;top:166px;width:322px;height:28px;background:#F9F8F7"></div>
<svg class="a" style="left:298px;top:167px" width="20" height="24" viewBox="0 0 20 24"><path d="M1.5 2.5h11l6 6v13.5q0 .5-.5.5h-16q-.5 0-.5-.5z" fill="url(#gPaper)" stroke="#8b8c87"/><path d="M2.5 21.5v-18h9.5" fill="none" stroke="#ffffff" stroke-width="1"/><path d="M12.5 2.5v6h6" fill="#ffffff" stroke="#8b8c87" stroke-width="0.9"/><line x1="4" y1="6.5" x2="11.5" y2="6.5" stroke="#bbbcb8"/><line x1="4" y1="8.5" x2="11.5" y2="8.5" stroke="#bbbcb8"/><line x1="4" y1="10.5" x2="16" y2="10.5" stroke="#bbbcb8"/><line x1="4" y1="12.5" x2="16" y2="12.5" stroke="#bbbcb8"/><line x1="4" y1="14.5" x2="16" y2="14.5" stroke="#bbbcb8"/><line x1="4" y1="16.5" x2="16" y2="16.5" stroke="#bbbcb8"/><line x1="4" y1="18.5" x2="13" y2="18.5" stroke="#bbbcb8"/></svg>
<div class="t" style="left:324px;top:171px;letter-spacing:0.41px;">hurz2.txt</div>
<div class="t" style="right:274px;top:171px;letter-spacing:0.25px;">9 bytes</div>
<div class="t" style="left:674px;top:171px;letter-spacing:0.30px;">plain text document</div>
<div class="t" style="left:810px;top:171px;letter-spacing:0.18px;">unknown</div>
<div class="a" style="left:258px;top:194px;width:341px;height:28px;background:#E9E3DA"></div>
<div class="a" style="left:599px;top:194px;width:322px;height:28px;background:#F3F0EC"></div>
<svg class="a" style="left:298px;top:195px" width="20" height="24" viewBox="0 0 20 24"><path d="M1.5 2.5h11l6 6v13.5q0 .5-.5.5h-16q-.5 0-.5-.5z" fill="url(#gPaper)" stroke="#8b8c87"/><path d="M2.5 21.5v-18h9.5" fill="none" stroke="#ffffff" stroke-width="1"/><path d="M12.5 2.5v6h6" fill="#ffffff" stroke="#8b8c87" stroke-width="0.9"/><line x1="4" y1="6.5" x2="11.5" y2="6.5" stroke="#bbbcb8"/><line x1="4" y1="8.5" x2="11.5" y2="8.5" stroke="#bbbcb8"/><line x1="4" y1="10.5" x2="16" y2="10.5" stroke="#bbbcb8"/><line x1="4" y1="12.5" x2="16" y2="12.5" stroke="#bbbcb8"/><line x1="4" y1="14.5" x2="16" y2="14.5" stroke="#bbbcb8"/><line x1="4" y1="16.5" x2="16" y2="16.5" stroke="#bbbcb8"/><line x1="4" y1="18.5" x2="13" y2="18.5" stroke="#bbbcb8"/></svg>
<div class="t" style="left:324px;top:199px;letter-spacing:0.29px;">hurz2 (copy).txt</div>
<div class="t" style="right:274px;top:199px;letter-spacing:0.25px;">9 bytes</div>
<div class="t" style="left:674px;top:199px;letter-spacing:0.30px;">plain text document</div>
<div class="t" style="left:810px;top:199px;letter-spacing:0.18px;">unknown</div>
<div class="a" style="left:258px;top:222px;width:341px;height:28px;background:#ECE8E3"></div>
<div class="a" style="left:599px;top:222px;width:322px;height:28px;background:#F9F8F7"></div>
<svg class="a" style="left:298px;top:223px" width="20" height="24" viewBox="0 0 20 24"><path d="M1.5 2.5h11l6 6v13.5q0 .5-.5.5h-16q-.5 0-.5-.5z" fill="url(#gPaper)" stroke="#8b8c87"/><path d="M2.5 21.5v-18h9.5" fill="none" stroke="#ffffff" stroke-width="1"/><path d="M12.5 2.5v6h6" fill="#ffffff" stroke="#8b8c87" stroke-width="0.9"/><line x1="4" y1="6.5" x2="11.5" y2="6.5" stroke="#bbbcb8"/><line x1="4" y1="8.5" x2="11.5" y2="8.5" stroke="#bbbcb8"/><line x1="4" y1="10.5" x2="16" y2="10.5" stroke="#bbbcb8"/><line x1="4" y1="12.5" x2="16" y2="12.5" stroke="#bbbcb8"/><line x1="4" y1="14.5" x2="16" y2="14.5" stroke="#bbbcb8"/><line x1="4" y1="16.5" x2="16" y2="16.5" stroke="#bbbcb8"/><line x1="4" y1="18.5" x2="13" y2="18.5" stroke="#bbbcb8"/></svg>
<div class="t" style="left:324px;top:227px;letter-spacing:0.38px;">hurz2 x.txt</div>
<div class="t" style="right:274px;top:227px;letter-spacing:0.25px;">9 bytes</div>
<div class="t" style="left:674px;top:227px;letter-spacing:0.30px;">plain text document</div>
<div class="t" style="left:810px;top:227px;letter-spacing:0.18px;">unknown</div>
<div class="a" style="left:258px;top:250px;width:341px;height:28px;background:#E9E3DA"></div>
<div class="a" style="left:599px;top:250px;width:322px;height:28px;background:#F3F0EC"></div>
<svg class="a" style="left:298px;top:251px" width="20" height="24" viewBox="0 0 20 24"><path d="M1.5 2.5h11l6 6v13.5q0 .5-.5.5h-16q-.5 0-.5-.5z" fill="url(#gPaper)" stroke="#8b8c87"/><path d="M2.5 21.5v-18h9.5" fill="none" stroke="#ffffff" stroke-width="1"/><path d="M12.5 2.5v6h6" fill="#ffffff" stroke="#8b8c87" stroke-width="0.9"/><line x1="4" y1="6.5" x2="11.5" y2="6.5" stroke="#bbbcb8"/><line x1="4" y1="8.5" x2="11.5" y2="8.5" stroke="#bbbcb8"/><line x1="4" y1="10.5" x2="16" y2="10.5" stroke="#bbbcb8"/><line x1="4" y1="12.5" x2="16" y2="12.5" stroke="#bbbcb8"/><line x1="4" y1="14.5" x2="16" y2="14.5" stroke="#bbbcb8"/><line x1="4" y1="16.5" x2="16" y2="16.5" stroke="#bbbcb8"/><line x1="4" y1="18.5" x2="13" y2="18.5" stroke="#bbbcb8"/></svg>
<div class="t" style="left:324px;top:255px;letter-spacing:0.17px;">hurz3</div>
<div class="t" style="right:274px;top:255px;letter-spacing:0.24px;">12 bytes</div>
<div class="t" style="left:674px;top:255px;letter-spacing:0.18px;">unknown</div>
<div class="t" style="left:810px;top:255px;letter-spacing:0.18px;">unknown</div>
<div class="a" style="left:258px;top:278px;width:341px;height:28px;background:#ECE8E3"></div>
<div class="a" style="left:599px;top:278px;width:322px;height:28px;background:#F9F8F7"></div>
<svg class="a" style="left:298px;top:279px" width="20" height="24" viewBox="0 0 20 24"><path d="M1.5 2.5h11l6 6v13.5q0 .5-.5.5h-16q-.5 0-.5-.5z" fill="url(#gPaper)" stroke="#8b8c87"/><path d="M2.5 21.5v-18h9.5" fill="none" stroke="#ffffff" stroke-width="1"/><path d="M12.5 2.5v6h6" fill="#ffffff" stroke="#8b8c87" stroke-width="0.9"/><line x1="4" y1="6.5" x2="11.5" y2="6.5" stroke="#bbbcb8"/><line x1="4" y1="8.5" x2="11.5" y2="8.5" stroke="#bbbcb8"/><line x1="4" y1="10.5" x2="16" y2="10.5" stroke="#bbbcb8"/><line x1="4" y1="12.5" x2="16" y2="12.5" stroke="#bbbcb8"/><line x1="4" y1="14.5" x2="16" y2="14.5" stroke="#bbbcb8"/><line x1="4" y1="16.5" x2="16" y2="16.5" stroke="#bbbcb8"/><line x1="4" y1="18.5" x2="13" y2="18.5" stroke="#bbbcb8"/></svg>
<div class="t" style="left:324px;top:283px;letter-spacing:-0.80px;">INSTALL</div>
<div class="t" style="right:274px;top:283px;letter-spacing:-0.24px;">7.6 KB</div>
<div class="t" style="left:674px;top:283px;letter-spacing:0.18px;">unknown</div>
<div class="t" style="left:810px;top:283px;letter-spacing:0.18px;">unknown</div>
<div class="a" style="left:258px;top:306px;width:341px;height:28px;background:#E9E3DA"></div>
<div class="a" style="left:599px;top:306px;width:322px;height:28px;background:#F3F0EC"></div>
<svg class="a" style="left:298px;top:307px" width="20" height="24" viewBox="0 0 20 24"><path d="M1.5 2.5h11l6 6v13.5q0 .5-.5.5h-16q-.5 0-.5-.5z" fill="url(#gPaper)" stroke="#8b8c87"/><path d="M2.5 21.5v-18h9.5" fill="none" stroke="#ffffff" stroke-width="1"/><path d="M12.5 2.5v6h6" fill="#ffffff" stroke="#8b8c87" stroke-width="0.9"/><line x1="4" y1="6.5" x2="11.5" y2="6.5" stroke="#bbbcb8"/><line x1="4" y1="8.5" x2="11.5" y2="8.5" stroke="#bbbcb8"/><line x1="4" y1="10.5" x2="16" y2="10.5" stroke="#bbbcb8"/><line x1="4" y1="12.5" x2="16" y2="12.5" stroke="#bbbcb8"/><line x1="4" y1="14.5" x2="16" y2="14.5" stroke="#bbbcb8"/><line x1="4" y1="16.5" x2="16" y2="16.5" stroke="#bbbcb8"/><line x1="4" y1="18.5" x2="13" y2="18.5" stroke="#bbbcb8"/></svg>
<div class="t" style="left:324px;top:311px;letter-spacing:-0.29px;">INSTALL (copy)</div>
<div class="t" style="right:274px;top:311px;letter-spacing:-0.24px;">7.6 KB</div>
<div class="t" style="left:674px;top:311px;letter-spacing:0.18px;">unknown</div>
<div class="t" style="left:810px;top:311px;letter-spacing:0.18px;">unknown</div>
<div class="a" style="left:258px;top:334px;width:341px;height:28px;background:#ECE8E3"></div>
<div class="a" style="left:599px;top:334px;width:322px;height:28px;background:#F9F8F7"></div>
<svg class="a" style="left:298px;top:335px" width="20" height="24" viewBox="0 0 20 24"><path d="M1.5 2.5h11l6 6v13.5q0 .5-.5.5h-16q-.5 0-.5-.5z" fill="url(#gPaper)" stroke="#8b8c87"/><path d="M2.5 21.5v-18h9.5" fill="none" stroke="#ffffff" stroke-width="1"/><path d="M12.5 2.5v6h6" fill="#ffffff" stroke="#8b8c87" stroke-width="0.9"/><line x1="4" y1="6.5" x2="11.5" y2="6.5" stroke="#bbbcb8"/><line x1="4" y1="8.5" x2="11.5" y2="8.5" stroke="#bbbcb8"/><line x1="4" y1="10.5" x2="16" y2="10.5" stroke="#bbbcb8"/><line x1="4" y1="12.5" x2="16" y2="12.5" stroke="#bbbcb8"/><line x1="4" y1="14.5" x2="16" y2="14.5" stroke="#bbbcb8"/><line x1="4" y1="16.5" x2="16" y2="16.5" stroke="#bbbcb8"/><line x1="4" y1="18.5" x2="13" y2="18.5" stroke="#bbbcb8"/></svg>
<div class="t" style="left:324px;top:339px;letter-spacing:0.42px;">newfile.txt</div>
<div class="t" style="right:274px;top:339px;letter-spacing:0.25px;">3 bytes</div>
<div class="t" style="left:674px;top:339px;letter-spacing:0.30px;">plain text document</div>
<div class="t" style="left:810px;top:339px;letter-spacing:0.18px;">unknown</div>
<div class="a" style="left:258px;top:362px;width:341px;height:28px;background:#E9E3DA"></div>
<div class="a" style="left:599px;top:362px;width:322px;height:28px;background:#F3F0EC"></div>
<svg class="a" style="left:298px;top:363px" width="20" height="24" viewBox="0 0 20 24"><path d="M1.5 2.5h11l6 6v13.5q0 .5-.5.5h-16q-.5 0-.5-.5z" fill="url(#gPaper)" stroke="#8b8c87"/><path d="M2.5 21.5v-18h9.5" fill="none" stroke="#ffffff" stroke-width="1"/><path d="M12.5 2.5v6h6" fill="#ffffff" stroke="#8b8c87" stroke-width="0.9"/><line x1="4" y1="6.5" x2="11.5" y2="6.5" stroke="#bbbcb8"/><line x1="4" y1="8.5" x2="11.5" y2="8.5" stroke="#bbbcb8"/><line x1="4" y1="10.5" x2="16" y2="10.5" stroke="#bbbcb8"/><line x1="4" y1="12.5" x2="16" y2="12.5" stroke="#bbbcb8"/><line x1="4" y1="14.5" x2="16" y2="14.5" stroke="#bbbcb8"/><line x1="4" y1="16.5" x2="16" y2="16.5" stroke="#bbbcb8"/><line x1="4" y1="18.5" x2="13" y2="18.5" stroke="#bbbcb8"/></svg>
<div class="t" style="left:324px;top:367px;letter-spacing:0.31px;">newfile (copy).txt</div>
<div class="t" style="right:274px;top:367px;letter-spacing:0.24px;">14 bytes</div>
<div class="t" style="left:674px;top:367px;letter-spacing:0.30px;">plain text document</div>
<div class="t" style="left:810px;top:367px;letter-spacing:0.18px;">unknown</div>
<div class="a" style="left:258px;top:390px;width:341px;height:28px;background:#ECE8E3"></div>
<div class="a" style="left:599px;top:390px;width:322px;height:28px;background:#F9F8F7"></div>
<svg class="a" style="left:298px;top:391px" width="20" height="24" viewBox="0 0 20 24"><path d="M1.5 2.5h11l6 6v13.5q0 .5-.5.5h-16q-.5 0-.5-.5z" fill="url(#gPaper)" stroke="#8b8c87"/><path d="M2.5 21.5v-18h9.5" fill="none" stroke="#ffffff" stroke-width="1"/><path d="M12.5 2.5v6h6" fill="#ffffff" stroke="#8b8c87" stroke-width="0.9"/><line x1="4" y1="6.5" x2="11.5" y2="6.5" stroke="#bbbcb8"/><line x1="4" y1="8.5" x2="11.5" y2="8.5" stroke="#bbbcb8"/><line x1="4" y1="10.5" x2="16" y2="10.5" stroke="#bbbcb8"/><line x1="4" y1="12.5" x2="16" y2="12.5" stroke="#bbbcb8"/><line x1="4" y1="14.5" x2="16" y2="14.5" stroke="#bbbcb8"/><line x1="4" y1="16.5" x2="16" y2="16.5" stroke="#bbbcb8"/><line x1="4" y1="18.5" x2="13" y2="18.5" stroke="#bbbcb8"/></svg>
<div class="t" style="left:324px;top:395px;letter-spacing:0.27px;">test_1.rtf</div>
<div class="t" style="right:274px;top:395px;letter-spacing:0.25px;">7 bytes</div>
<div class="t" style="left:674px;top:395px;letter-spacing:0.18px;">unknown</div>
<div class="t" style="left:810px;top:395px;letter-spacing:0.18px;">unknown</div>
<div class="a" style="left:258px;top:418px;width:341px;height:28px;background:#E9E3DA"></div>
<div class="a" style="left:599px;top:418px;width:322px;height:28px;background:#F3F0EC"></div>
<svg class="a" style="left:298px;top:419px" width="20" height="24" viewBox="0 0 20 24"><path d="M1.5 2.5h11l6 6v13.5q0 .5-.5.5h-16q-.5 0-.5-.5z" fill="url(#gPaper)" stroke="#8b8c87"/><path d="M2.5 21.5v-18h9.5" fill="none" stroke="#ffffff" stroke-width="1"/><path d="M12.5 2.5v6h6" fill="#ffffff" stroke="#8b8c87" stroke-width="0.9"/><line x1="4" y1="6.5" x2="11.5" y2="6.5" stroke="#bbbcb8"/><line x1="4" y1="8.5" x2="11.5" y2="8.5" stroke="#bbbcb8"/><line x1="4" y1="10.5" x2="16" y2="10.5" stroke="#bbbcb8"/><line x1="4" y1="12.5" x2="16" y2="12.5" stroke="#bbbcb8"/><line x1="4" y1="14.5" x2="16" y2="14.5" stroke="#bbbcb8"/><line x1="4" y1="16.5" x2="16" y2="16.5" stroke="#bbbcb8"/><line x1="4" y1="18.5" x2="13" y2="18.5" stroke="#bbbcb8"/></svg>
<div class="t" style="left:324px;top:423px;letter-spacing:0.32px;">untitled folder (2)</div>
<div class="t" style="right:274px;top:423px;letter-spacing:-0.24px;">1.7 KB</div>
<div class="t" style="left:674px;top:423px;letter-spacing:0.18px;">unknown</div>
<div class="t" style="left:810px;top:423px;letter-spacing:0.18px;">unknown</div>
</div>
<div class="a" style="left:921px;top:148px;width:15px;height:1px;background:#f5b060"></div>
<div class="a" style="left:921px;top:149px;width:15px;height:459px;background:#c9c0b5;border:1px solid #8b8176;border-radius:3px"></div>
<div class="a" style="left:921px;top:149px;width:15px;height:14px;background:linear-gradient(#fbfaf9,#e8e4df);border:1px solid #8b8176;border-radius:3px 3px 0 0"></div>
<svg class="a" style="left:924px;top:153px" width="9" height="5" viewBox="0 0 9 5" ><path d="M0 5h9L4.5 0z" fill="#111"/></svg>
<div class="a" style="left:921px;top:594px;width:15px;height:14px;background:linear-gradient(#f3f0ec,#e4dfd9);border:1px solid #8b8176;border-radius:0 0 3px 3px"></div>
<svg class="a" style="left:924px;top:599px" width="9" height="5" viewBox="0 0 9 5" ><path d="M0 0h9L4.5 5z" fill="#111"/></svg>
<div class="a" style="left:921px;top:206px;width:15px;height:166px;background:linear-gradient(90deg,#f6f4f1,#e9e5e0);border:1px solid #8b8176;box-shadow:inset 0 1px 0 #fff"></div>
<svg class="a" style="left:925px;top:280px" width="10" height="19" viewBox="0 0 10 19" ><rect x="0" y="0" width="1" height="1" fill="#b0a89e"/><rect x="1" y="1" width="1" height="1" fill="#fff"/><rect x="3" y="0" width="1" height="1" fill="#b0a89e"/><rect x="4" y="1" width="1" height="1" fill="#fff"/><rect x="6" y="0" width="1" height="1" fill="#b0a89e"/><rect x="7" y="1" width="1" height="1" fill="#fff"/><rect x="0" y="3" width="1" height="1" fill="#b0a89e"/><rect x="1" y="4" width="1" height="1" fill="#fff"/><rect x="3" y="3" width="1" height="1" fill="#b0a89e"/><rect x="4" y="4" width="1" height="1" fill="#fff"/><rect x="6" y="3" width="1" height="1" fill="#b0a89e"/><rect x="7" y="4" width="1" height="1" fill="#fff"/><rect x="0" y="6" width="1" height="1" fill="#b0a89e"/><rect x="1" y="7" width="1" height="1" fill="#fff"/><rect x="3" y="6" width="1" height="1" fill="#b0a89e"/><rect x="4" y="7" width="1" height="1" fill="#fff"/><rect x="6" y="6" width="1" height="1" fill="#b0a89e"/><rect x="7" y="7" width="1" height="1" fill="#fff"/><rect x="0" y="9" width="1" height="1" fill="#b0a89e"/><rect x="1" y="10" width="1" height="1" fill="#fff"/><rect x="3" y="9" width="1" height="1" fill="#b0a89e"/><rect x="4" y="10" width="1" height="1" fill="#fff"/><rect x="6" y="9" width="1" height="1" fill="#b0a89e"/><rect x="7" y="10" width="1" height="1" fill="#fff"/><rect x="0" y="12" width="1" height="1" fill="#b0a89e"/><rect x="1" y="13" width="1" height="1" fill="#fff"/><rect x="3" y="12" width="1" height="1" fill="#b0a89e"/><rect x="4" y="13" width="1" height="1" fill="#fff"/><rect x="6" y="12" width="1" height="1" fill="#b0a89e"/><rect x="7" y="13" width="1" height="1" fill="#fff"/><rect x="0" y="15" width="1" height="1" fill="#b0a89e"/><rect x="1" y="16" width="1" height="1" fill="#fff"/><rect x="3" y="15" width="1" height="1" fill="#b0a89e"/><rect x="4" y="16" width="1" height="1" fill="#fff"/><rect x="6" y="15" width="1" height="1" fill="#b0a89e"/><rect x="7" y="16" width="1" height="1" fill="#fff"/></svg>
<div class="a" style="left:922px;top:212px;width:13px;height:1px;background:#d2ccc5"></div>
<div class="a" style="left:922px;top:365px;width:13px;height:1px;background:#d2ccc5"></div>
<div class="t" style="left:7px;top:610px;letter-spacing:0.25px;color:#3c3c3c">"nautilus" selected</div>
<svg class="a" style="left:924px;top:616px" width="12" height="12" viewBox="0 0 12 12" ><rect x="9" y="9" width="1" height="1" fill="#9a9288"/><rect x="10" y="10" width="1" height="1" fill="#fff"/><rect x="6" y="9" width="1" height="1" fill="#9a9288"/><rect x="7" y="10" width="1" height="1" fill="#fff"/><rect x="3" y="9" width="1" height="1" fill="#9a9288"/><rect x="4" y="10" width="1" height="1" fill="#fff"/><rect x="0" y="9" width="1" height="1" fill="#9a9288"/><rect x="1" y="10" width="1" height="1" fill="#fff"/><rect x="9" y="6" width="1" height="1" fill="#9a9288"/><rect x="10" y="7" width="1" height="1" fill="#fff"/><rect x="6" y="6" width="1" height="1" fill="#9a9288"/><rect x="7" y="7" width="1" height="1" fill="#fff"/><rect x="3" y="6" width="1" height="1" fill="#9a9288"/><rect x="4" y="7" width="1" height="1" fill="#fff"/><rect x="9" y="3" width="1" height="1" fill="#9a9288"/><rect x="10" y="4" width="1" height="1" fill="#fff"/><rect x="6" y="3" width="1" height="1" fill="#9a9288"/><rect x="7" y="4" width="1" height="1" fill="#fff"/><rect x="9" y="0" width="1" height="1" fill="#9a9288"/><rect x="10" y="1" width="1" height="1" fill="#fff"/></svg>
</body></html>
